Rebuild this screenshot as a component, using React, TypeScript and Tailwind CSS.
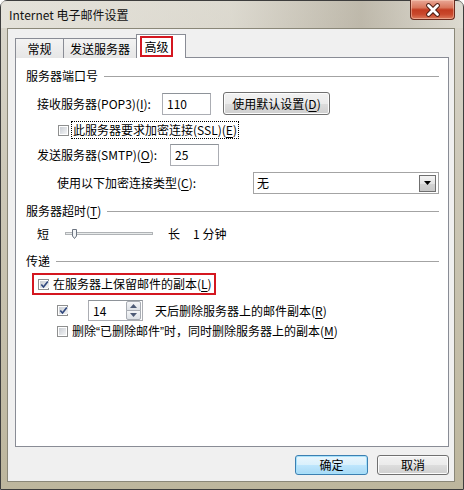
import React from "react";

function Check({ checked = false }: { checked?: boolean }) {
  return (
    <span className="flex h-[11px] w-[11px] shrink-0 border border-[#8e8f8f] bg-white p-px">
      <span className="flex flex-1 items-center justify-center bg-[linear-gradient(135deg,#c9cdd3,#f4f5f6)]">
        {checked && (
          <svg width="9" height="9" viewBox="0 0 9 9">
            <path d="M1.3 4.4 L3.5 7 L7.8 1.4" fill="none" stroke="#30487e" strokeWidth="1.6" />
          </svg>
        )}
      </span>
    </span>
  );
}

function U({ c }: { c: string }) {
  return <span className="underline underline-offset-[2px]">{c}</span>;
}

function Q({ c }: { c: string }) {
  return <span className="font-['Liberation_Sans',sans-serif]">{c}</span>;
}

function Group({ children }: { children: React.ReactNode }) {
  return (
    <div className="flex h-[16px] items-center gap-[6px] pl-[10px] pr-[9px]">
      <span className="whitespace-nowrap">{children}</span>
      <div className="h-px flex-1 bg-[#a3a3a3]" />
    </div>
  );
}

function WinButton({ children, def = false, w }: { children: React.ReactNode; def?: boolean; w: string }) {
  return (
    <div
      className={
        "flex h-[20px] items-center justify-center rounded-[3px] border " +
        w +
        " " +
        (def
          ? "border-[#3c7fb1] bg-[linear-gradient(to_bottom,#eaf6fd,#d9f0fc_50%,#bee6fd_51%,#a7d9f5)] shadow-[inset_0_0_0_1px_#a6e1fb]"
          : "border-[#707070] bg-[linear-gradient(to_bottom,#f2f2f2,#ebebeb_50%,#dddddd_51%,#cfcfcf)] shadow-[inset_0_0_0_1px_#fcfcfc]")
      }
    >
      {children}
    </div>
  );
}

export default function App() {
  return (
    <div className="h-[490px] w-[464px] overflow-hidden bg-white font-['Noto_Sans_CJK_SC',sans-serif] text-[12px] leading-[16px] text-black">
      <div className="relative flex h-[490px] w-[464px] flex-col rounded-t-[7px] border border-[#3d3d3d] bg-[linear-gradient(to_bottom,#dad7cd,#cdc8b8_35%,#bdb69d)]">
        {/* title bar */}
        <div className="flex h-[27px] items-center bg-[linear-gradient(90deg,rgba(236,234,228,0.6),rgba(225,222,213,0.35)_50%,rgba(140,130,110,0.35)_78%,rgba(230,228,220,0.35))] pl-[8px] pt-[1px]">
          <span className="text-[12px] text-[#111]">Internet 电子邮件设置</span>
        </div>
        <div className="absolute right-[8px] top-[-1px] flex h-[20px] w-[45px] items-center justify-center rounded-b-[4px] border border-t-0 border-[#6b2b1e] bg-[linear-gradient(to_bottom,#e9a897,#d9765c_40%,#c33c21_52%,#c9482c_75%,#dc7a5c)] shadow-[inset_0_0_0_1px_rgba(255,220,200,0.45)]">
          <svg width="16" height="14" viewBox="0 0 16 14">
            <path d="M3.5 2.5 L12.5 11.5 M12.5 2.5 L3.5 11.5" stroke="#4a1a10" strokeWidth="4.6" strokeLinecap="round" />
            <path d="M3.5 2.5 L12.5 11.5 M12.5 2.5 L3.5 11.5" stroke="#ffffff" strokeWidth="2.8" strokeLinecap="round" />
          </svg>
        </div>

        {/* client */}
        <div className="ml-[6px] flex h-[454px] w-[448px] flex-col border border-[#8a8778] bg-[#f0f0f0]">
          {/* tabs */}
          <div className="relative z-10 -mb-px flex h-[29px] items-end pl-[7px] pt-[5px]">
            <div className="flex h-[20px] w-[49px] items-center justify-center border border-b-0 border-[#898c95] bg-[linear-gradient(to_bottom,#f3f3f3,#e6e6e6)] pt-px">
              常规
            </div>
            <div className="-ml-px flex h-[20px] w-[74px] items-center justify-center border border-b-0 border-[#898c95] bg-[linear-gradient(to_bottom,#f3f3f3,#e6e6e6)] pt-px">
              发送服务器
            </div>
            <div className="-ml-px flex h-[24px] w-[50px] items-start border border-b-0 border-[#898c95] bg-white pl-[3px] pt-[1px]">
              <span className="flex h-[21px] w-[33px] items-center justify-center border-2 border-[#d41720]">高级</span>
            </div>
          </div>

          {/* panel */}
          <div className="ml-[7px] flex h-[390px] w-[434px] flex-col border border-[#898c95] bg-white">
            <div className="mt-[10px]">
              <Group>服务器端口号</Group>
            </div>

            <div className="mt-[8px] flex h-[23px] items-center pl-[21px]">
              <span className="w-[125px] whitespace-nowrap">
                接收服务器(POP3)(<U c="I" />):
              </span>
              <div className="flex h-[22px] w-[49px] items-center border border-[#abadb3] border-t-[#8e9399] bg-white pl-[4px]">110</div>
              <div className="ml-[12px]">
                <WinButton w="w-[107px] h-[23px]">
                  使用默认设置(<U c="D" />)
                </WinButton>
              </div>
            </div>

            <div className="mt-[6px] flex h-[18px] items-center pl-[42px]">
              <Check />
              <span className="ml-[2px] flex h-[18px] items-center whitespace-nowrap border border-dotted border-black px-px">
                此服务器要求加密连接(SSL)(<U c="E" />)
              </span>
            </div>

            <div className="mt-[5px] flex h-[22px] items-center pl-[21px]">
              <span className="w-[133px] whitespace-nowrap">
                发送服务器(SMTP)(<U c="O" />):
              </span>
              <div className="flex h-[22px] w-[49px] items-center border border-[#abadb3] border-t-[#8e9399] bg-white pl-[4px]">25</div>
            </div>

            <div className="mt-[6px] flex h-[22px] items-center pl-[41px]">
              <span className="w-[196px] whitespace-nowrap">
                使用以下加密连接类型(<U c="C" />):
              </span>
              <div className="flex h-[22px] w-[186px] items-center justify-between border border-[#a4a4a4] bg-white pl-[3px] pr-[2px]">
                <span>无</span>
                <div className="flex h-[17px] w-[17px] items-center justify-center border border-[#6f6f6f] bg-[linear-gradient(to_bottom,#f4f4f4,#e4e4e4_50%,#d3d3d3_51%,#c8c8c8)]">
                  <svg width="7" height="4" viewBox="0 0 7 4">
                    <path d="M0 0 L7 0 L3.5 4 Z" fill="#000" />
                  </svg>
                </div>
              </div>
            </div>

            <div className="mt-[9px]">
              <Group>
                服务器超时(<U c="T" />)
              </Group>
            </div>

            <div className="mt-[7px] flex h-[16px] items-center pl-[21px]">
              <span>短</span>
              <svg className="ml-[16px]" width="88" height="16" viewBox="0 0 88 16">
                <rect x="0.5" y="6.5" width="87" height="2" fill="#e7eaea" stroke="#b0b3b6" />
                <path d="M7.5 3.5 L11.5 3.5 L11.5 10 L9.5 12.5 L7.5 10 Z" fill="#f2f4f6" stroke="#6c7480" />
              </svg>
              <span className="ml-[15px]">长</span>
              <span className="ml-[13px]">1 分钟</span>
            </div>

            <div className="mt-[11px]">
              <Group>传递</Group>
            </div>

            <div className="mt-[4px] flex h-[22px] items-center pl-[16px]">
              <div className="flex h-[22px] w-[184px] items-center border-2 border-[#d41720] pl-[4px]">
                <Check checked />
                <span className="ml-[4px] whitespace-nowrap">
                  在服务器上保留邮件的副本(<U c="L" />)
                </span>
              </div>
            </div>

            <div className="mt-[5px] flex h-[21px] items-center pl-[41px]">
              <Check checked />
              <div className="ml-[20px] flex h-[21px] w-[55px] items-center justify-between border border-[#abadb3] border-t-[#8e9399] bg-white pl-[4px] pr-px">
                <span>14</span>
                <div className="flex h-[19px] w-[15px] flex-col">
                  <div className="flex flex-1 items-center justify-center rounded-t-[2px] border border-[#a8acb3] bg-[linear-gradient(to_bottom,#f4f5f7,#dde1e6)]">
                    <svg width="7" height="4" viewBox="0 0 7 4">
                      <path d="M0 4 L7 4 L3.5 0 Z" fill="#4d5a75" />
                    </svg>
                  </div>
                  <div className="-mt-px flex flex-1 items-center justify-center rounded-b-[2px] border border-[#a8acb3] bg-[linear-gradient(to_bottom,#f4f5f7,#dde1e6)]">
                    <svg width="7" height="4" viewBox="0 0 7 4">
                      <path d="M0 0 L7 0 L3.5 4 Z" fill="#4d5a75" />
                    </svg>
                  </div>
                </div>
              </div>
              <span className="ml-[12px] whitespace-nowrap">
                天后删除服务器上的邮件副本(<U c="R" />)
              </span>
            </div>

            <div className="mt-[2px] flex h-[16px] items-center pl-[41px]">
              <Check />
              <span className="ml-[4px] whitespace-nowrap">
                删除<Q c="“" />已删除邮件<Q c="”" />时，同时删除服务器上的副本(<U c="M" />)
              </span>
            </div>
          </div>

          {/* buttons */}
          <div className="mt-[8px] flex justify-end gap-[9px] pr-[5px]">
            <WinButton def w="w-[73px]">
              确定
            </WinButton>
            <WinButton w="w-[72px]">取消</WinButton>
          </div>
        </div>
      </div>
    </div>
  );
}
